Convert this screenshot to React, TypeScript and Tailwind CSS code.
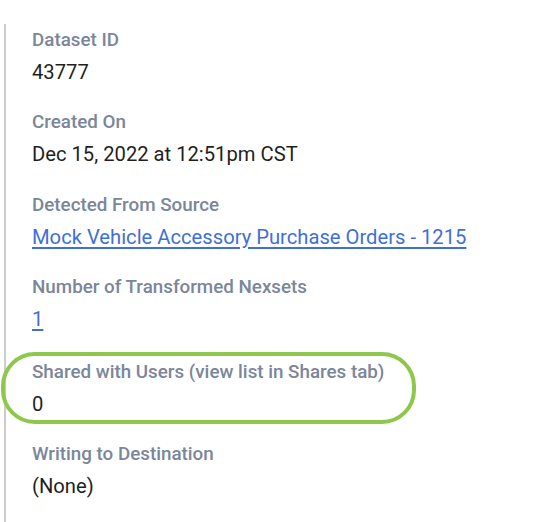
const label = "text-[18.8px] leading-[24px] font-medium text-[#7b869b]";
const value = "text-[20.2px] leading-[24px] text-[#1f1f1f]";
const link = "text-[20.2px] leading-[24px] text-[#3f6fd8] underline underline-offset-[3px] decoration-[1.5px]";

function Field({ title, children, ring }: { title: string; children: React.ReactNode; ring?: boolean }) {
  return (
    <div className="relative flex flex-col gap-[8px]">
      {ring && (
        <div className="pointer-events-none absolute left-[-31px] top-[-8px] h-[72px] w-[415px] rounded-[34px] border-[4px] border-[#8dc84c]" />
      )}
      <div className={label}>{title}</div>
      {children}
    </div>
  );
}

export default function App() {
  return (
    <div
      className="h-[522px] w-[556px] overflow-hidden bg-white pt-[24px]"
      style={{ fontFamily: "Roboto, 'Liberation Sans', sans-serif" }}
    >
      <div className="ml-[4px] flex h-full flex-col gap-[26.5px] border-l-2 border-[#cccccc] pl-[26px] pt-[3.5px]">
        <Field title="Dataset ID">
          <div className={value}>43777</div>
        </Field>
        <Field title="Created On">
          <div className={value}>Dec 15, 2022 at 12:51pm CST</div>
        </Field>
        <Field title="Detected From Source">
          <a href="#" className={link}>Mock Vehicle Accessory Purchase Orders - 1215</a>
        </Field>
        <Field title="Number of Transformed Nexsets">
          <div>
            <a href="#" className={link}>1</a>
          </div>
        </Field>
        <Field title="Shared with Users (view list in Shares tab)" ring>
          <div className={value}>0</div>
        </Field>
        <Field title="Writing to Destination">
          <div className={value}>(None)</div>
        </Field>
      </div>
    </div>
  );
}
